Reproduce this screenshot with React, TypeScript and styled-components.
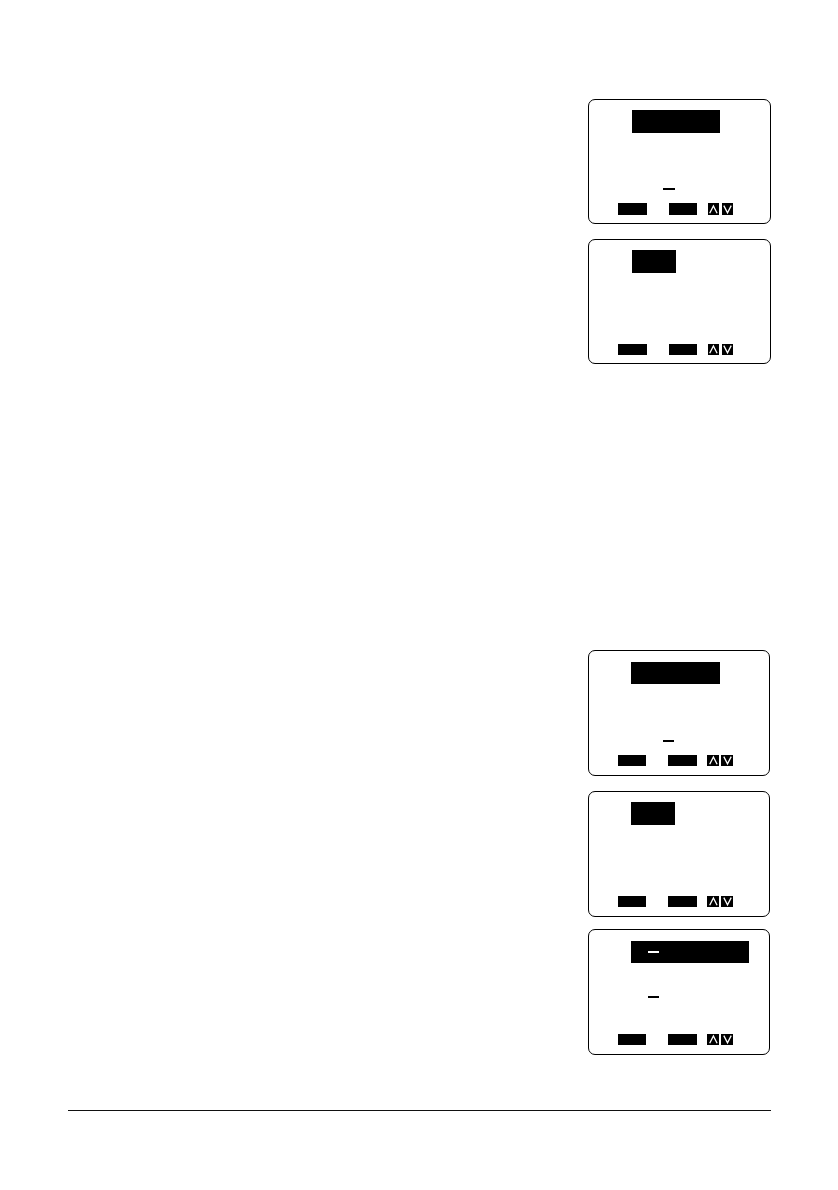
import React from "react";
import styled, { createGlobalStyle } from "styled-components";

const GlobalStyle = createGlobalStyle`
  *, *::before, *::after { box-sizing: border-box; }
  body {
    margin: 0;
    background: #fff;
    color: #000;
    font-family: "Liberation Sans", Arial, sans-serif;
  }
`;

const Page = styled.main`
  display: flex;
  flex-direction: column;
  padding: 99px 67px 79px 68px;
`;

const Figures = styled.div`
  display: flex;
  flex-direction: column;
  gap: 286px;
  width: 183px;
  margin-left: auto;
`;

const Group = styled.section<{ $inset?: number }>`
  display: flex;
  flex-direction: column;
  gap: 15px;
  padding-right: ${(p) => p.$inset ?? 0}px;
`;

const Screen = styled.div<{ $compact: boolean; $pull?: boolean; $top: number }>`
  display: flex;
  flex-direction: column;
  min-height: ${(p) => (p.$compact ? 126 : 125)}px;
  margin-top: ${(p) => (p.$pull ? -3 : 0)}px;
  padding: ${(p) => p.$top}px 0 ${(p) => (p.$compact ? 9 : 8)}px;
  border: 1px solid #000;
  border-radius: 7px;
`;

const Highlight = styled.div<{ $width: number; $height: number; $compact: boolean }>`
  display: flex;
  align-items: center;
  width: ${(p) => p.$width}px;
  height: ${(p) => p.$height}px;
  margin-left: ${(p) => (p.$compact ? 42 : 43)}px;
  padding-left: 17px;
  background: #000;
`;

const Body = styled.div<{ $indent: number; $below: number }>`
  display: flex;
  flex: 1;
  align-items: flex-end;
  padding: 0 0 ${(p) => p.$below}px ${(p) => p.$indent}px;
`;

const Dash = styled.span<{ $wide?: boolean; $light?: boolean }>`
  width: ${(p) => (p.$wide ? 12 : 11)}px;
  height: 2px;
  background: ${(p) => (p.$light ? "#fff" : "#000")};
`;

const Keys = styled.div<{ $compact: boolean }>`
  display: flex;
  gap: 22px;
  height: ${(p) => (p.$compact ? 11 : 12)}px;
  margin-left: 29px;
`;

const Key = styled.span<{ $width: number }>`
  width: ${(p) => p.$width}px;
  background: #000;
`;

const KeyPair = styled.span<{ $compact: boolean }>`
  display: flex;
  gap: ${(p) => (p.$compact ? 10 : 11)}px;
`;

const Arrows = styled.span<{ $compact: boolean }>`
  display: flex;
  gap: ${(p) => (p.$compact ? 2 : 3)}px;
`;

const ArrowKey = styled.span<{ $compact: boolean }>`
  display: flex;
  align-items: flex-end;
  justify-content: center;
  width: ${(p) => (p.$compact ? 12 : 11)}px;
  background: #000;
`;

const Rule = styled.hr`
  width: 100%;
  height: 1px;
  margin: 55px 0 0;
  border: 0;
  background: #111;
`;

function Arrow({ d }: { d: string }) {
  return (
    <svg width="11" height="11" viewBox="0 0 11 11" fill="none" stroke="#fff" strokeWidth="1.3">
      <path d={d} />
    </svg>
  );
}

type DisplayProps = {
  highlight: number;
  highlightHeight?: number;
  top?: number;
  compact?: boolean;
  pull?: boolean;
  keysCompact?: boolean;
  titleDash?: boolean;
  dash?: { indent: number; below: number };
};

function Display({
  highlight,
  highlightHeight = 23,
  top = 10,
  compact = false,
  pull,
  keysCompact = true,
  titleDash,
  dash,
}: DisplayProps) {
  return (
    <Screen $compact={compact} $pull={pull} $top={top}>
      <Highlight $width={highlight} $height={highlightHeight} $compact={compact}>
        {titleDash && <Dash $light />}
      </Highlight>
      <Body $indent={dash?.indent ?? 0} $below={dash?.below ?? 0}>
        {dash && <Dash $wide={!compact} />}
      </Body>
      <Keys $compact={keysCompact}>
        <Key $width={compact ? 28 : 29} />
        <KeyPair $compact={compact}>
          <Key $width={compact ? 29 : 28} />
          <Arrows $compact={compact}>
            <ArrowKey $compact={compact}>
              <Arrow d="M1.7 9.2 L5.4 2 L9.1 9.2" />
            </ArrowKey>
            <ArrowKey $compact={compact}>
              <Arrow d="M1.8 1.6 L5.5 8.8 L9.2 1.6" />
            </ArrowKey>
          </Arrows>
        </KeyPair>
      </Keys>
    </Screen>
  );
}

export default function App() {
  return (
    <>
      <GlobalStyle />
      <Page>
        <Figures>
          <Group>
            <Display highlight={88} keysCompact={false} dash={{ indent: 74, below: 13 }} />
            <Display highlight={44} />
          </Group>
          <Group $inset={1}>
            <Display compact top={11} highlight={89} highlightHeight={22} dash={{ indent: 74, below: 13 }} />
            <Display compact highlight={44} />
            <Display
              compact
              pull
              top={11}
              highlight={118}
              highlightHeight={22}
              titleDash
              dash={{ indent: 59, below: 36 }}
            />
          </Group>
        </Figures>
        <Rule />
      </Page>
    </>
  );
}
